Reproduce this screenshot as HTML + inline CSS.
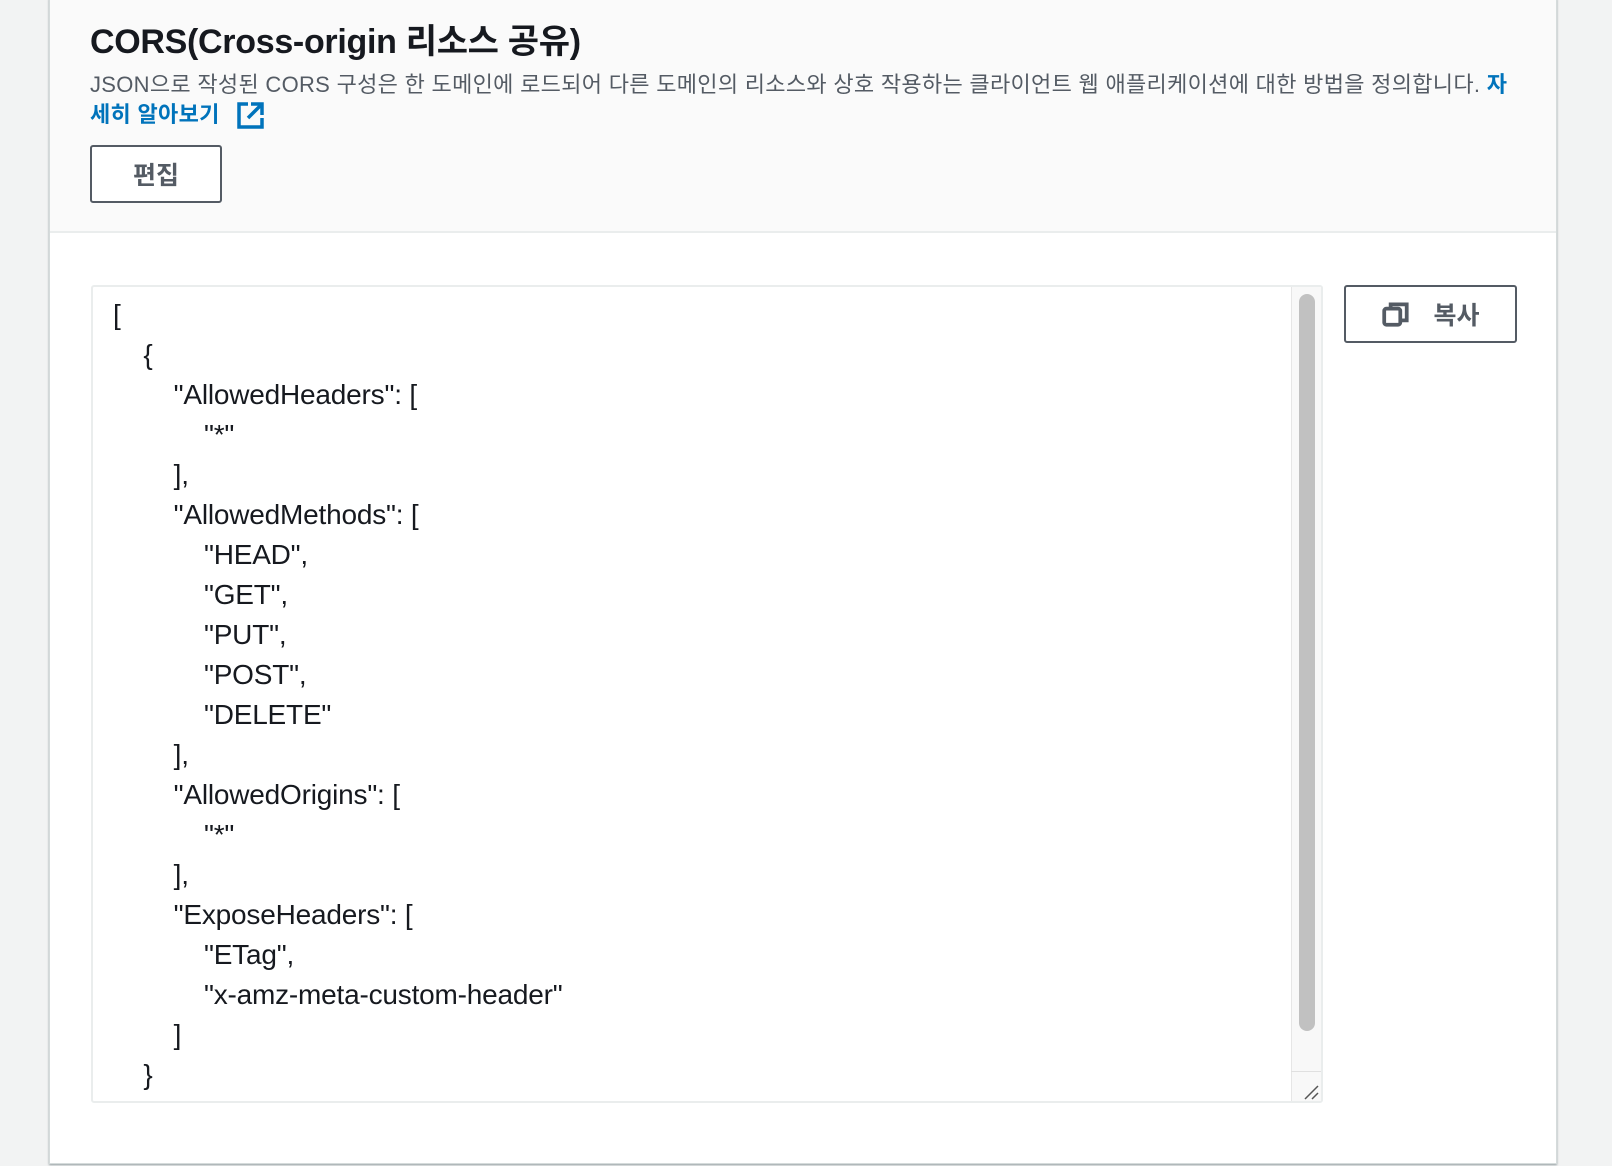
<!DOCTYPE html>
<html><head><meta charset="utf-8"><style>
*{margin:0;padding:0;box-sizing:border-box}
body{width:1612px;height:1166px;background:#f2f3f3;font-family:"Liberation Sans","Noto Sans CJK KR",sans-serif;position:relative;overflow:hidden}
.panel{position:absolute;left:49px;top:-2px;width:1508px;height:1166px;background:#fff;border:1px solid #d5dbdb;box-shadow:0 1px 2px rgba(0,28,36,.4)}
.head{position:absolute;left:0;top:0;width:100%;height:234px;background:#fafafa;border-bottom:2px solid #eaeded}
h1{position:absolute;left:40px;top:15px;font-size:34px;font-weight:bold;color:#16191f;letter-spacing:-0.3px;white-space:nowrap}
.desc{position:absolute;left:40px;top:71px;width:1432px;font-size:22px;line-height:30px;color:#545b64;letter-spacing:0.3px}
.desc a{color:#0073bb;font-weight:bold;text-decoration:none}
.btn{position:absolute;border:2px solid #545b64;border-radius:3px;background:#fff;color:#545b64;font-weight:bold;font-size:25px;display:flex;align-items:center;justify-content:center}
.ta{position:absolute;left:41px;top:286px;width:1232px;height:818px;border:2px solid #eaeded;border-radius:3px;background:#fff}
.code{position:absolute;left:20px;top:8px;font-size:28px;line-height:40px;color:#16191f;white-space:pre;letter-spacing:-0.2px}
.track{position:absolute;right:0;top:0;width:30px;height:100%;background:#f8f8f8;border-left:1px solid #e6e6e6}
.thumb{position:absolute;left:7px;top:7px;width:16px;height:737px;background:#c1c1c1;border-radius:8px}
.corner{position:absolute;right:0;bottom:0;width:30px;height:30px;border-top:1px solid #e0e0e0}
</style></head><body>
<div class="panel">
<div class="head">
<h1>CORS(Cross-origin 리소스 공유)</h1>
<div class="desc">JSON으로 작성된 CORS 구성은 한 도메인에 로드되어 다른 도메인의 리소스와 상호 작용하는 클라이언트 웹 애플리케이션에 대한 방법을 정의합니다. <a>자세히 알아보기 <svg width="30" height="30" viewBox="0 0 30 30" style="vertical-align:-8px;margin-left:10px"><path d="M12 4H3v23h23v-9" fill="none" stroke="#0073bb" stroke-width="3.5"/><path d="M15 4h11v11M26 4L12 18" fill="none" stroke="#0073bb" stroke-width="3.5"/></svg></a></div>
<div class="btn" style="left:40px;top:146px;width:132px;height:58px">편집</div>
</div>
<div class="ta">
<div class="code">[
    {
        "AllowedHeaders": [
            "*"
        ],
        "AllowedMethods": [
            "HEAD",
            "GET",
            "PUT",
            "POST",
            "DELETE"
        ],
        "AllowedOrigins": [
            "*"
        ],
        "ExposeHeaders": [
            "ETag",
            "x-amz-meta-custom-header"
        ]
    }</div>
<div class="track"><div class="thumb"></div><div class="corner"><svg width="30" height="30"><path d="M14 27L27 14M21 27L27 21" stroke="#555" stroke-width="1.5"/></svg></div></div>
</div>
<div class="btn" style="left:1294px;top:286px;width:173px;height:58px"><svg width="30" height="30" viewBox="0 0 28 28" style="margin-right:22px"><rect x="3" y="9" width="15" height="15" rx="2" fill="none" stroke="#545b64" stroke-width="3.5"/><path d="M9 9V5h15v15h-6" fill="none" stroke="#545b64" stroke-width="3.5"/></svg>복사</div>
</div>
</body></html>
